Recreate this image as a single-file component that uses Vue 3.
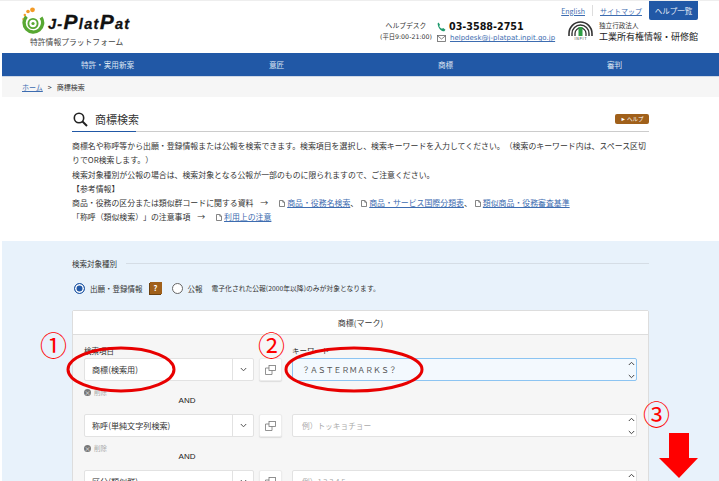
<template>
  <div class="page">
    <header class="header">
      <div class="logo">
        <div class="logo-main">
          <svg class="swirl" width="24" height="27" viewBox="0 0 24 27">
            <path d="M4.500 9.500A9.300 9.300 0 1 0 19 10.500" fill="none" stroke="#57a832" stroke-width="3.400" />
            <circle cx="11" cy="16.500" r="4.600" fill="none" stroke="#57a832" stroke-width="1.900" />
            <circle cx="11" cy="16.500" r="1.600" fill="#57a832" />
            <circle cx="10.500" cy="2.800" r="2.400" fill="#f39a26" />
            <circle cx="6" cy="4.500" r="1.800" fill="#f39a26" />
            <circle cx="2.800" cy="8" r="1.200" fill="#f39a26" />
            <circle cx="1" cy="12" r=".8" fill="#f39a26" />
          </svg>
          <span class="logo-name">J-<span class="logo-cap">P</span>lat<span class="logo-cap">P</span>at</span>
        </div>
        <div class="logo-sub">特許情報プラットフォーム</div>
      </div>

      <div class="header-right">
        <div class="top-links">
          <a class="link">English</a>
          <span class="sep"></span>
          <a class="link">サイトマップ</a>
          <span class="help-list">ヘルプ一覧</span>
        </div>
        <div class="contact-row">
          <div class="desk">
            <div class="desk-title">ヘルプデスク</div>
            <div class="desk-hours">(平日9:00-21:00)</div>
          </div>
          <div class="contact">
            <div class="tel">
              <svg width="9" height="10" viewBox="0 0 9 10">
                <path d="M1.500 .5 3 2.800 2.300 4c.5 1.300 1.300 2.200 2.700 2.800L6.200 6 8.500 7.700 7.300 9.300C3.800 9.300 .8 5.500 .6 1.500Z" fill="#1f9a6d" />
              </svg>
              <span class="tel-number">03-3588-2751</span>
            </div>
            <div class="mail">
              <svg width="9" height="7" viewBox="0 0 9 7">
                <rect x=".5" y=".5" width="8" height="6" fill="none" stroke="#666" stroke-width=".8" />
                <path d="M.5 .8 4.500 4 8.500 .8" fill="none" stroke="#666" stroke-width=".8" />
              </svg>
              <a class="link">helpdesk@j-platpat.inpit.go.jp</a>
            </div>
          </div>
          <div class="inpit">
            <div class="inpit-mark">
              <svg width="25" height="15" viewBox="0 0 25 15">
                <path d="M1 15V12.500A11.500 11.500 0 0 1 24 12.500V15" fill="none" stroke="#333" stroke-width="1.600" />
                <path d="M4 15V12.500A8.500 8.500 0 0 1 21 12.500V15" fill="none" stroke="#333" stroke-width="1.400" />
                <path d="M7 15V12.500A5.500 5.500 0 0 1 18 12.500V15" fill="none" stroke="#333" stroke-width="1.300" />
                <rect x="10.500" y="6" width="4" height="9" fill="#2f9e44" />
              </svg>
              <span class="inpit-letters">I N P I T</span>
            </div>
            <div class="inpit-text">
              <div class="inpit-small">独立行政法人</div>
              <div class="inpit-name">工業所有権情報・研修館</div>
            </div>
          </div>
        </div>
      </div>
    </header>

    <nav class="nav">
      <span v-for="item in navItems" :key="item">{{ item }}</span>
    </nav>

    <div class="crumbs">
      <a class="link">ホーム</a>
      <span class="crumb-arrow">&gt;</span>
      <span>商標検索</span>
    </div>

    <main class="intro">
      <div class="title-row">
        <svg width="15" height="15" viewBox="0 0 15 15">
          <circle cx="6" cy="6" r="4.700" fill="none" stroke="#222" stroke-width="1.600" />
          <path d="M9.500 9.500 14 14" stroke="#222" stroke-width="2" />
        </svg>
        <h1 class="title">商標検索</h1>
        <span class="help-badge">► ヘルプ</span>
      </div>
      <div class="desc">
        <p>商標名や称呼等から出願・登録情報または公報を検索できます。検索項目を選択し、検索キーワードを入力してください。（検索のキーワード内は、スペース区切りでOR検索します。）</p>
        <p>検索対象種別が公報の場合は、検索対象となる公報が一部のものに限られますので、ご注意ください。</p>
        <p>【参考情報】</p>
        <p>
          商品・役務の区分または類似群コードに関する資料 <span class="to">→</span>
          <span v-for="(name, index) in refLinks" :key="name"><svg class="doc" width="6" height="7" viewBox="0 0 6 7"><path d="M.5 .5H3.800L5.500 2.200V6.500H.5ZM3.800 .5V2.200H5.500" fill="none" stroke="#666" stroke-width=".8" /></svg><a class="link">{{ name }}</a>{{ index < refLinks.length - 1 ? "、" : "" }}</span>
        </p>
        <p>
          「称呼（類似検索）」の注意事項 <span class="to">→</span>
          <svg class="doc" width="6" height="7" viewBox="0 0 6 7"><path d="M.5 .5H3.800L5.500 2.200V6.500H.5ZM3.800 .5V2.200H5.500" fill="none" stroke="#666" stroke-width=".8" /></svg><a class="link">利用上の注意</a>
        </p>
      </div>
    </main>

    <section class="search">
      <div class="type-label">
        <span>検索対象種別</span>
        <span class="type-line"></span>
      </div>
      <div class="type-row">
        <span class="radio radio--on"></span>
        <span class="type-name">出願・登録情報</span>
        <span class="question">?</span>
        <span class="radio"></span>
        <span class="type-name">公報</span>
        <span class="type-note">電子化された公報(2000年以降)のみが対象となります。</span>
      </div>

      <div class="card">
        <div class="card-head">商標(マーク)</div>
        <div class="card-body">
          <template v-for="(row, index) in rows" :key="index">
            <div class="field-row">
              <div class="select-col">
                <div v-if="index === 0" class="field-label">検索項目</div>
                <div class="select">
                  <span class="select-text">{{ row.item }}</span>
                  <span class="select-arrow">
                    <svg width="7" height="5" viewBox="0 0 7 5">
                      <path d="M.8 1 3.500 3.800 6.200 1" fill="none" stroke="#555" stroke-width="1" />
                    </svg>
                  </span>
                </div>
              </div>
              <div class="copy-col">
                <button class="copy">
                  <svg width="11" height="10" viewBox="0 0 11 10">
                    <rect x="4" y=".5" width="6.500" height="5" fill="none" stroke="#777" stroke-width=".8" />
                    <path d="M4 3H.5V9.500H7V5.500" fill="none" stroke="#777" stroke-width=".8" />
                  </svg>
                </button>
              </div>
              <div class="key-col">
                <div v-if="index === 0" class="field-label">キーワード</div>
                <div class="keyword" :class="{ 'keyword--active': row.value }">
                  <span v-if="row.value" class="keyword-value">{{ row.value }}</span>
                  <span v-else class="keyword-hint">{{ row.hint }}</span>
                  <span class="spin">
                    <svg width="7" height="20" viewBox="0 0 7 20">
                      <path d="M.8 5 3.500 2.300 6.200 5M.8 15 3.500 17.700 6.200 15" fill="none" stroke="#444" stroke-width="1" />
                    </svg>
                  </span>
                </div>
              </div>
            </div>
            <div v-if="index < 2" class="remove">
              <span class="remove-icon">×</span>
              <span>削除</span>
            </div>
            <div v-if="index < 2" class="and">AND</div>
          </template>
        </div>
      </div>
    </section>

    <svg class="marks" width="719" height="481" viewBox="0 0 719 481">
      <ellipse cx="121" cy="369.500" rx="53" ry="21.500" fill="none" stroke="#e80000" stroke-width="3" />
      <ellipse cx="354" cy="369.500" rx="68" ry="21.500" fill="none" stroke="#e80000" stroke-width="3" />
      <path d="M669 433H689V458H698L679 478 659 458H669Z" fill="#f00" />
    </svg>
    <span class="mark-no mark-no--1">①</span>
    <span class="mark-no mark-no--2">②</span>
    <span class="mark-no mark-no--3">③</span>
  </div>
</template>

<script setup>
const navItems = ["特許・実用新案", "意匠", "商標", "審判"];

const refLinks = ["商品・役務名検索", "商品・サービス国際分類表", "類似商品・役務審査基準"];

const rows = [
  { item: "商標(検索用)", value: "？ＡＳＴＥＲＭＡＲＫＳ？", hint: "" },
  { item: "称呼(単純文字列検索)", value: "", hint: "例）トッキョチョー" },
  { item: "区分(類似群)", value: "", hint: "例）1 2 3 4 5" }
];
</script>

<style>
html,
body {
  margin: 0;
  background: #fff;
}
</style>

<style scoped>
.page {
  position: relative;
  width: 719px;
  height: 481px;
  overflow: hidden;
  border-top: 1px solid #eee;
  box-sizing: border-box;
  font-family: "Noto Sans CJK JP", "Noto Sans", sans-serif;
  font-size: 8px;
  color: #333;
  text-spacing-trim: space-all;
}

.link {
  color: #3d6cb0;
  text-decoration: underline;
}

.header {
  display: flex;
  justify-content: space-between;
  height: 52px;
  padding: 0 21px 0 22px;
}

.logo {
  padding-top: 7px;
}

.logo-main {
  display: flex;
  align-items: flex-end;
  gap: 2px;
  height: 26px;
}

.logo-name {
  font-family: "Liberation Sans", sans-serif;
  font-size: 14.500px;
  font-weight: 700;
  font-style: italic;
  line-height: 19px;
  letter-spacing: 1.300px;
  color: #111;
  -webkit-text-stroke: 0.3px #111;
}

.logo-cap {
  font-size: 21px;
}

.logo-sub {
  margin: 2px 0 0 8px;
  font-size: 7.800px;
  line-height: 12px;
  color: #444;
  white-space: nowrap;
}

.header-right {
  display: flex;
  flex-direction: column;
  align-items: flex-end;
}

.top-links {
  display: flex;
  align-items: center;
  gap: 7px;
  height: 19px;
  font-size: 7px;
}

.sep {
  width: 1px;
  height: 11px;
  background: #ddd;
}

.help-list {
  display: flex;
  align-items: center;
  justify-content: center;
  width: 49px;
  height: 19px;
  border-radius: 0 0 2px 2px;
  background: #2158a6;
  color: #e8eef8;
  font-size: 7.500px;
}

.contact-row {
  display: flex;
  align-items: flex-start;
}

.desk {
  width: 62px;
  text-align: center;
}

.desk-title {
  font-size: 6.800px;
  line-height: 10px;
}

.desk-hours {
  margin-top: 2px;
  font-family: "DejaVu Sans", "Noto Sans CJK JP", sans-serif;
  font-size: 6.300px;
  line-height: 10px;
  white-space: nowrap;
}

.contact {
  width: 131px;
}

.tel {
  display: flex;
  align-items: center;
  gap: 3px;
  height: 13px;
}

.tel-number {
  font-family: "DejaVu Sans", sans-serif;
  font-size: 9.600px;
  font-weight: 700;
  color: #111;
}

.mail {
  display: flex;
  align-items: center;
  gap: 4px;
  margin-top: 0;
  font-family: "DejaVu Sans", sans-serif;
  font-size: 7px;
  line-height: 10px;
  white-space: nowrap;
}

.inpit {
  display: flex;
  gap: 6px;
}

.inpit-mark {
  display: flex;
  flex-direction: column;
  align-items: center;
  width: 25px;
  padding-top: 1px;
}

.inpit-letters {
  font-size: 3.500px;
  line-height: 6px;
  white-space: nowrap;
}

.inpit-text {
  padding-top: 1px;
}

.inpit-small {
  font-size: 6.600px;
  line-height: 9px;
}

.inpit-name {
  margin-top: 1px;
  font-size: 9px;
  line-height: 12px;
  white-space: nowrap;
  color: #222;
}

.nav {
  display: grid;
  grid-template-columns: repeat(4, 169px);
  align-items: center;
  height: 23px;
  margin-left: 2px;
  padding-left: 21px;
  border-bottom: 1px solid #cfd8e6;
  background: #2158a6;
  color: #dfe7f3;
  font-size: 7.600px;
  text-align: center;
}

.crumbs {
  display: flex;
  align-items: center;
  gap: 3px;
  height: 20px;
  margin-left: 2px;
  padding-left: 20px;
  background: #f6f6f6;
  font-size: 7px;
}

.crumb-arrow {
  margin: 0 2px;
}

.intro {
  height: 144px;
  padding: 0 70px 0 72px;
}

.title-row {
  position: relative;
  display: flex;
  align-items: center;
  height: 35px;
  padding: 10px 0 0 1px;
  border-bottom: 1px solid #ccc;
  box-sizing: border-box;
}

.title-row::after {
  content: "";
  position: absolute;
  left: 0;
  bottom: -1px;
  width: 64px;
  height: 1px;
  background: #2158a6;
}

.title {
  flex: 1;
  margin: 0 0 0 7px;
  font-size: 11px;
  font-weight: 400;
  color: #333;
}

.help-badge {
  width: 34px;
  height: 10px;
  border-radius: 2px;
  background: #a0601a;
  color: #fff;
  font-size: 5.500px;
  line-height: 10px;
  text-align: center;
  white-space: nowrap;
}

.desc {
  padding-top: 7px;
  font-size: 7.900px;
  line-height: 14.300px;
}

.desc p {
  margin: 0;
}

.to {
  margin: 0 8px 0 5px;
}

.doc {
  margin: 0 2px 0 3px;
  vertical-align: -0.5px;
}

.search {
  height: 240px;
  margin-left: 2px;
  padding: 15px 70px 0 70px;
  background: #e8f2fb;
}

.type-label {
  display: flex;
  align-items: center;
  gap: 9px;
  height: 14px;
  font-size: 7.500px;
}

.type-line {
  flex: 1;
  height: 1px;
  background: #d5dde5;
}

.type-row {
  display: flex;
  align-items: center;
  height: 20px;
  margin-top: 8px;
  font-size: 7.500px;
}

.radio {
  width: 9px;
  height: 9px;
  margin-left: 2px;
  border: 1px solid #666;
  border-radius: 50%;
  background: #fff;
}

.radio--on {
  border-color: #2158a6;
  box-shadow: inset 0 0 0 1.500px #fff;
  background: #2158a6;
}

.type-name {
  margin-left: 5px;
}

.question {
  width: 12px;
  height: 12px;
  margin: 0 8px 0 7px;
  background: #a0601a;
  box-shadow: -1px 1px 0 #6b4210;
  color: #fff;
  font-weight: 700;
  line-height: 12px;
  text-align: center;
}

.type-note {
  margin-left: 9px;
  font-size: 6.800px;
}

.card {
  margin-top: 12px;
  border: 1px solid #ddd;
  border-radius: 2px;
  background: #f6f6f6;
}

.card-head {
  height: 23px;
  border-bottom: 1px solid #ddd;
  background: #fff;
  font-size: 8px;
  line-height: 23px;
  text-align: center;
}

.card-body {
  padding: 11px 11px 0 11px;
}

.field-row {
  display: flex;
  align-items: flex-end;
}

.field-label {
  height: 12px;
  font-size: 7.500px;
  line-height: 10px;
}

.select-col {
  width: 170px;
}

.select {
  display: flex;
  align-items: center;
  height: 23px;
  border: 1px solid #e2e2e2;
  border-radius: 2px;
  box-sizing: border-box;
  background: #fff;
}

.select-text {
  flex: 1;
  padding-left: 7px;
  font-size: 8.100px;
}

.select-arrow {
  display: flex;
  align-items: center;
  justify-content: center;
  width: 20px;
  height: 100%;
  border-left: 1px solid #e2e2e2;
}

.copy-col {
  width: 38px;
}

.copy {
  display: flex;
  align-items: center;
  justify-content: center;
  width: 23px;
  height: 23px;
  margin-left: 5px;
  padding: 0;
  border: 1px solid #ececec;
  border-radius: 2px;
  background: #fff;
  box-shadow: 0 1px 1px #ddd;
}

.key-col {
  flex: 1;
}

.keyword {
  display: flex;
  align-items: center;
  justify-content: space-between;
  height: 23px;
  padding: 0 1px 0 9px;
  border: 1px solid #e2e2e2;
  border-radius: 2px;
  box-sizing: border-box;
  background: #fff;
}

.keyword--active {
  border-color: #8cc4f2;
  background: #f3f9fe;
}

.keyword-value {
  font-size: 7.900px;
  color: #555;
  white-space: nowrap;
}

.keyword-hint {
  color: #aaa;
  font-size: 7.700px;
}

.spin {
  display: flex;
}

.remove {
  display: flex;
  align-items: center;
  gap: 3px;
  height: 12px;
  margin-top: 5px;
  color: #aaa;
  font-size: 6.500px;
}

.remove-icon {
  width: 7px;
  height: 7px;
  border-radius: 50%;
  background: #777;
  color: #eee;
  font-size: 6px;
  line-height: 7px;
  text-align: center;
}

.and {
  width: 206px;
  height: 18px;
  margin-top: -2px;
  color: #222;
  font-family: "Liberation Sans", sans-serif;
  font-size: 8px;
  line-height: 10px;
  text-align: center;
}

.marks {
  position: absolute;
  top: -1px;
  left: 0;
}

.mark-no {
  position: absolute;
  color: #f00;
  font-family: "DejaVu Serif", "Noto Sans CJK JP", serif;
  font-size: 27px;
  line-height: 30px;
}

.mark-no--1 {
  top: 331px;
  left: 40px;
}

.mark-no--2 {
  top: 331px;
  left: 258px;
}

.mark-no--3 {
  top: 400px;
  left: 643px;
}
</style>
